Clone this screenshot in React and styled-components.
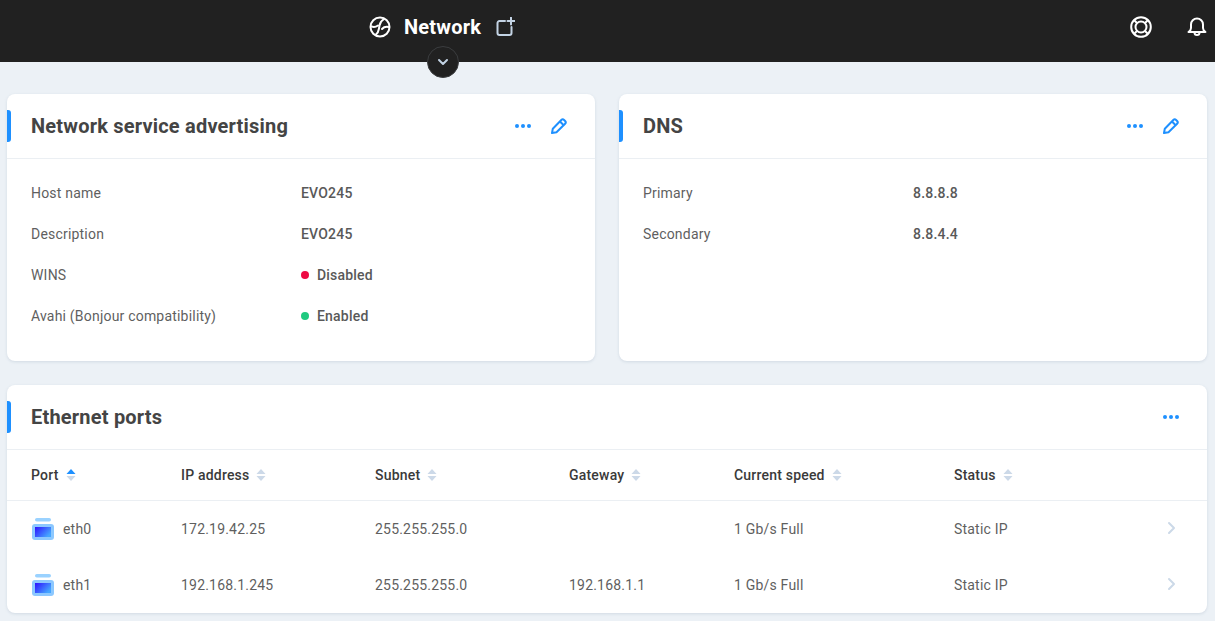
import React from 'react';
import styled, { createGlobalStyle } from 'styled-components';

const GlobalStyle = createGlobalStyle`
  html, body {
    margin: 0;
    padding: 0;
    height: 100%;
    background: #ecf1f6;
    font-family: Roboto, "Liberation Sans", sans-serif;
    letter-spacing: 0.2px;
    overflow: hidden;
  }
  * { box-sizing: border-box; }
`;

// Top bar
const TopBar = styled.header`
  position: relative;
  display: flex;
  align-items: center;
  height: 62px;
  padding: 0 7px 8px 369px;
  background: #212121;
  color: #fff;
`;

const PageIcon = styled.svg`
  width: 22px;
  height: 22px;
  margin-right: 13px;
`;

const PageTitle = styled.h1`
  margin: 0 14px 0 0;
  font-size: 20px;
  font-weight: 700;
  line-height: 24px;
`;

const AddIcon = styled.svg`
  width: 20px;
  height: 20px;
  margin-top: -1px;
`;

const TopActions = styled.div`
  display: flex;
  align-items: center;
  gap: 34px;
  margin-left: auto;
`;

const TopIcon = styled.svg`
  width: 22px;
  height: 22px;
  display: block;
`;

const ExpandButton = styled.button`
  position: absolute;
  left: 427px;
  top: 46px;
  display: flex;
  align-items: center;
  justify-content: center;
  width: 32px;
  height: 32px;
  padding: 0;
  border: 1px solid #3b3d3f;
  border-radius: 50%;
  background: #212121;
`;

// Page layout
const Content = styled.main`
  display: grid;
  grid-template-columns: 588px 588px;
  grid-template-rows: 267px 228px;
  gap: 24px;
  padding: 32px 8px 0 7px;
`;

const Card = styled.section`
  background: #fff;
  border-radius: 8px;
  box-shadow: 0 1px 3px rgba(130, 150, 175, 0.25);
  overflow: hidden;
  grid-column: ${(p) => (p.$wide ? '1 / -1' : 'auto')};
`;

const CardHeader = styled.div`
  position: relative;
  display: flex;
  align-items: center;
  height: 65px;
  padding: 0 18px 0 24px;
  border-bottom: 1px solid #ebeff3;

  &::before {
    content: '';
    position: absolute;
    left: 0;
    top: 16px;
    width: 4px;
    height: 32px;
    background: #1e90ff;
    border-radius: 0 3px 3px 0;
  }
`;

const CardTitle = styled.h2`
  flex: 1;
  margin: 0;
  font-size: 20px;
  font-weight: 700;
  color: #444;
`;

const HeaderAction = styled.button`
  display: flex;
  align-items: center;
  justify-content: center;
  width: 36px;
  height: 36px;
  padding: 0;
  border: 0;
  background: none;
`;

const InfoList = styled.dl`
  margin: 0;
  padding: 13px 24px 0;
`;

const InfoRow = styled.div`
  display: grid;
  grid-template-columns: 270px 1fr;
  align-items: center;
  height: 41px;
`;

const InfoLabel = styled.dt`
  font-size: 14px;
  color: #5f5f5f;
`;

const InfoValue = styled.dd`
  display: flex;
  align-items: center;
  gap: 8px;
  margin: 0;
  font-size: 14px;
  font-weight: 500;
  color: #595959;
`;

const Dot = styled.span`
  width: 8px;
  height: 8px;
  border-radius: 50%;
  background: ${(p) => p.$color};
`;

// Ethernet table
const columns = '150px 194px 194px 165px 220px 1fr 20px';

const TableHead = styled.div`
  display: grid;
  grid-template-columns: ${columns};
  align-items: center;
  height: 51px;
  padding: 0 24px;
  border-bottom: 1px solid #ebeff3;
`;

const HeadCell = styled.div`
  display: flex;
  align-items: center;
  gap: 7px;
  font-size: 14px;
  font-weight: 500;
  color: #3a3a3a;
`;

const TableRow = styled.div`
  display: grid;
  grid-template-columns: ${columns};
  align-items: center;
  height: 56px;
  padding: 0 24px;
`;

const Cell = styled.div`
  display: flex;
  align-items: center;
  gap: 9px;
  font-size: 14px;
  color: #5f5f5f;
`;

const PortGlyph = styled.svg`
  width: 22px;
  height: 22px;
  margin-left: 1px;
`;

const Chevron = styled.svg`
  width: 16px;
  height: 16px;
  justify-self: end;
  margin: -2px 4px 0 0;
`;

const GlobeIcon = () => (
  <PageIcon viewBox="0 0 22 22" fill="none" stroke="#fff" strokeWidth="2" strokeLinecap="round">
    <circle cx="11" cy="11" r="9.500" />
    <path d="M15 3c-2.500 1.500-4 3.500-4.500 6.500l-.5 3c-.4 2.800-1.500 5-3.500 6.500" />
    <path d="M2.500 10.500c2.500.8 4.500.4 6.500-1" />
    <path d="M19.500 11c-2.800-.5-5 .3-6.500 2" />
  </PageIcon>
);

const BuoyIcon = () => (
  <TopIcon viewBox="0 0 22 22" fill="none" stroke="#fff" strokeWidth="2">
    <circle cx="11" cy="11" r="9.800" />
    <circle cx="11" cy="11" r="5.500" />
    <path d="M4 4l3.200 3.200M18 4l-3.200 3.200M4 18l3.200-3.200M18 18l-3.200-3.200" />
  </TopIcon>
);

const BellIcon = () => (
  <TopIcon viewBox="0 0 22 22" fill="none" stroke="#fff" strokeWidth="2" strokeLinecap="round" strokeLinejoin="round">
    <path d="M2.500 16c1.500-1 2.500-2 2.500-4V8.500a6 6 0 0 1 12 0V12c0 2 1 3 2.500 4z" />
    <path d="M8.500 16.500a2.500 2.500 0 0 0 5 0" />
  </TopIcon>
);

const DotsIcon = () => (
  <svg width="18" height="6" viewBox="0 0 18 6" fill="#1e90ff">
    <circle cx="3" cy="3" r="2" />
    <circle cx="9" cy="3" r="2" />
    <circle cx="15" cy="3" r="2" />
  </svg>
);

const PencilIcon = () => (
  <svg width="18" height="18" viewBox="0 0 18 18" fill="none" stroke="#1e90ff" strokeWidth="2" strokeLinejoin="round">
    <path d="M2 16l.8-4.300 8.500-8.700a2 2 0 0 1 2.800 0l1 1a2 2 0 0 1 0 2.800l-8.600 8.500z" />
    <path d="M10 4.500l3.700 3.700" />
  </svg>
);

const SortIcon = ({ active }) => (
  <svg width="10" height="14" viewBox="0 0 10 14">
    <path d="M5 1l4.500 5h-9z" fill={active ? '#1e90ff' : '#ccd9e8'} />
    <path d="M5 13L.500 8h9z" fill="#ccd9e8" />
  </svg>
);

const PortIcon = () => (
  <PortGlyph viewBox="0 0 22 22">
    <defs>
      <linearGradient id="portFill" x1="0" y1="0" x2="1" y2="0.600">
        <stop offset="0" stopColor="#2d10ff" />
        <stop offset="1" stopColor="#45a6ff" />
      </linearGradient>
    </defs>
    <rect x="3" y="0" width="16" height="3.500" rx="1.750" fill="#9ad2ff" />
    <rect x="0" y="6" width="22" height="16" rx="3" fill="#8cc8ff" />
    <rect x="3" y="9" width="16" height="10" fill="url(#portFill)" />
  </PortGlyph>
);

const headers = ['Port', 'IP address', 'Subnet', 'Gateway', 'Current speed', 'Status'];

const ports = [
  { name: 'eth0', ip: '172.19.42.25', subnet: '255.255.255.0', gateway: '', speed: '1 Gb/s Full', status: 'Static IP' },
  { name: 'eth1', ip: '192.168.1.245', subnet: '255.255.255.0', gateway: '192.168.1.1', speed: '1 Gb/s Full', status: 'Static IP' },
];

const App = () => (
  <>
    <GlobalStyle />
    <TopBar>
      <GlobeIcon />
      <PageTitle>Network</PageTitle>
      <AddIcon viewBox="0 0 20 20" fill="none" stroke="#c3d3e4" strokeWidth="2" strokeLinecap="round">
        <path d="M10 4H4.500a2 2 0 0 0-2 2v10a2 2 0 0 0 2 2h10a2 2 0 0 0 2-2v-6" />
        <path d="M16 0.500v7M12.500 4h7" />
      </AddIcon>
      <TopActions>
        <BuoyIcon />
        <BellIcon />
      </TopActions>
      <ExpandButton aria-label="Expand">
        <svg width="12" height="8" viewBox="0 0 12 8" fill="none" stroke="#c3d3e4" strokeWidth="2" strokeLinecap="round" strokeLinejoin="round">
          <path d="M2 2l4 4 4-4" />
        </svg>
      </ExpandButton>
    </TopBar>

    <Content>
      <Card>
        <CardHeader>
          <CardTitle>Network service advertising</CardTitle>
          <HeaderAction><DotsIcon /></HeaderAction>
          <HeaderAction><PencilIcon /></HeaderAction>
        </CardHeader>
        <InfoList>
          <InfoRow><InfoLabel>Host name</InfoLabel><InfoValue>EVO245</InfoValue></InfoRow>
          <InfoRow><InfoLabel>Description</InfoLabel><InfoValue>EVO245</InfoValue></InfoRow>
          <InfoRow><InfoLabel>WINS</InfoLabel><InfoValue><Dot $color="#ee0a43" />Disabled</InfoValue></InfoRow>
          <InfoRow><InfoLabel>Avahi (Bonjour compatibility)</InfoLabel><InfoValue><Dot $color="#1fc97f" />Enabled</InfoValue></InfoRow>
        </InfoList>
      </Card>

      <Card>
        <CardHeader>
          <CardTitle>DNS</CardTitle>
          <HeaderAction><DotsIcon /></HeaderAction>
          <HeaderAction><PencilIcon /></HeaderAction>
        </CardHeader>
        <InfoList>
          <InfoRow><InfoLabel>Primary</InfoLabel><InfoValue>8.8.8.8</InfoValue></InfoRow>
          <InfoRow><InfoLabel>Secondary</InfoLabel><InfoValue>8.8.4.4</InfoValue></InfoRow>
        </InfoList>
      </Card>

      <Card $wide>
        <CardHeader>
          <CardTitle>Ethernet ports</CardTitle>
          <HeaderAction><DotsIcon /></HeaderAction>
        </CardHeader>
        <TableHead>
          {headers.map((h, i) => (
            <HeadCell key={h}>{h}<SortIcon active={i === 0} /></HeadCell>
          ))}
        </TableHead>
        {ports.map((p) => (
          <TableRow key={p.name}>
            <Cell><PortIcon />{p.name}</Cell>
            <Cell>{p.ip}</Cell>
            <Cell>{p.subnet}</Cell>
            <Cell>{p.gateway}</Cell>
            <Cell>{p.speed}</Cell>
            <Cell>{p.status}</Cell>
            <Chevron viewBox="0 0 16 16" fill="none" stroke="#ccd9e8" strokeWidth="2" strokeLinecap="round" strokeLinejoin="round">
              <path d="M6 3l5 5-5 5" />
            </Chevron>
          </TableRow>
        ))}
      </Card>
    </Content>
  </>
);

export default App;
